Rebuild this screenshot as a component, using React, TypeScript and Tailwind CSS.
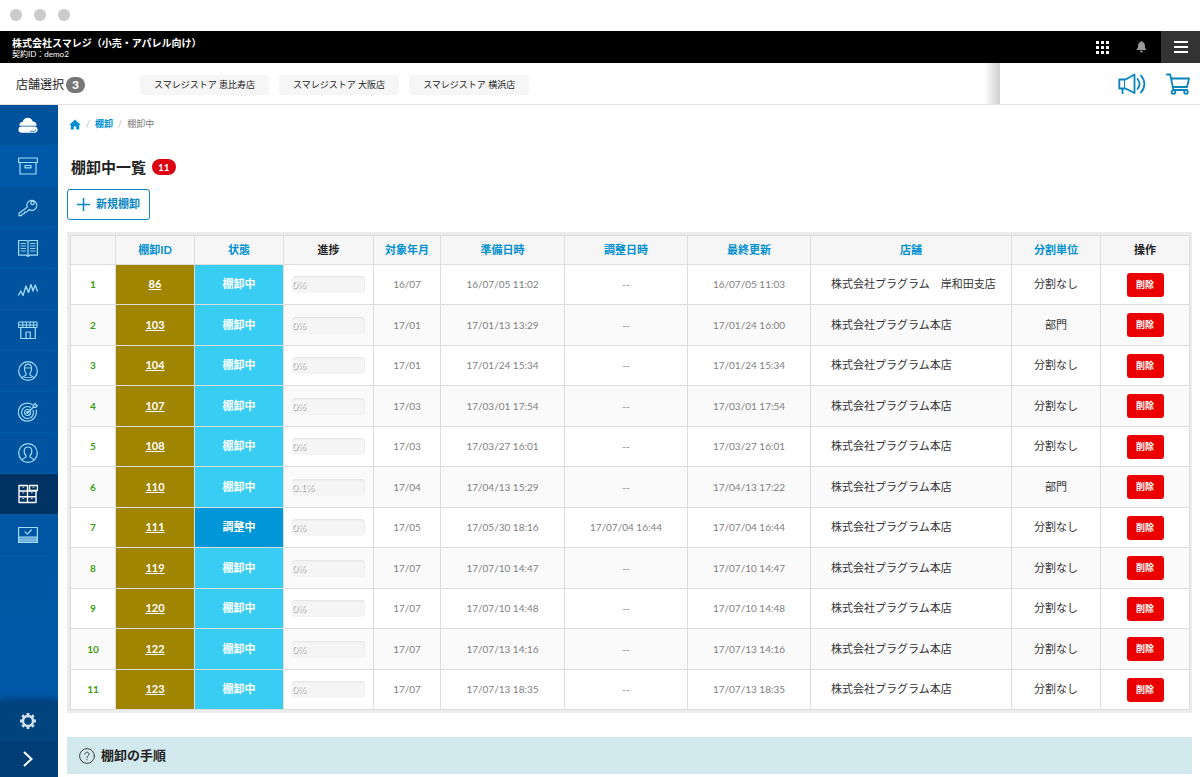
import type { ReactNode } from "react";

interface Stocktake {
  id: number;
  status: string;
  progress: string;
  month: string;
  prepared: [string, string];
  adjusted?: [string, string];
  updated: [string, string];
  store: string;
  unit: string;
}

const HONTEN = "株式会社プラグラム本店";

const stocktakes: Stocktake[] = [
  { id: 86, status: "棚卸中", progress: "0%", month: "16/07", prepared: ["16/07/05", "11:02"], updated: ["16/07/05", "11:03"], store: "株式会社プラグラム　岸和田支店", unit: "分割なし" },
  { id: 103, status: "棚卸中", progress: "0%", month: "17/01", prepared: ["17/01/13", "13:29"], updated: ["17/01/24", "16:00"], store: HONTEN, unit: "部門" },
  { id: 104, status: "棚卸中", progress: "0%", month: "17/01", prepared: ["17/01/24", "15:34"], updated: ["17/01/24", "15:34"], store: HONTEN, unit: "分割なし" },
  { id: 107, status: "棚卸中", progress: "0%", month: "17/03", prepared: ["17/03/01", "17:54"], updated: ["17/03/01", "17:54"], store: HONTEN, unit: "分割なし" },
  { id: 108, status: "棚卸中", progress: "0%", month: "17/03", prepared: ["17/03/27", "16:01"], updated: ["17/03/27", "16:01"], store: HONTEN, unit: "分割なし" },
  { id: 110, status: "棚卸中", progress: "0.1%", month: "17/04", prepared: ["17/04/13", "15:29"], updated: ["17/04/13", "17:22"], store: HONTEN, unit: "部門" },
  { id: 111, status: "調整中", progress: "0%", month: "17/05", prepared: ["17/05/30", "18:16"], adjusted: ["17/07/04", "16:44"], updated: ["17/07/04", "16:44"], store: HONTEN, unit: "分割なし" },
  { id: 119, status: "棚卸中", progress: "0%", month: "17/07", prepared: ["17/07/10", "14:47"], updated: ["17/07/10", "14:47"], store: HONTEN, unit: "分割なし" },
  { id: 120, status: "棚卸中", progress: "0%", month: "17/07", prepared: ["17/07/10", "14:48"], updated: ["17/07/10", "14:48"], store: HONTEN, unit: "分割なし" },
  { id: 122, status: "棚卸中", progress: "0%", month: "17/07", prepared: ["17/07/13", "14:16"], updated: ["17/07/13", "14:16"], store: HONTEN, unit: "分割なし" },
  { id: 123, status: "棚卸中", progress: "0%", month: "17/07", prepared: ["17/07/13", "18:35"], updated: ["17/07/13", "18:35"], store: HONTEN, unit: "分割なし" },
];

const columns = [
  { label: "", width: "w-[45px]", sortable: false },
  { label: "棚卸ID", width: "w-[79px]", sortable: true },
  { label: "状態", width: "w-[89px]", sortable: true },
  { label: "進捗", width: "w-[90px]", sortable: false },
  { label: "対象年月", width: "w-[67px]", sortable: true },
  { label: "準備日時", width: "w-[124px]", sortable: true },
  { label: "調整日時", width: "w-[123px]", sortable: true },
  { label: "最終更新", width: "w-[123px]", sortable: true },
  { label: "店舗", width: "w-[201px]", sortable: true },
  { label: "分割単位", width: "w-[89px]", sortable: true },
  { label: "操作", width: "w-[89px]", sortable: false },
];

const stores = ["恵比寿店", "大阪店", "横浜店"];

function Icon({ children }: { children: ReactNode }) {
  return (
    <svg viewBox="0 0 20 20" className="size-5" fill="none" stroke="currentColor" strokeWidth="1.2" strokeLinecap="round" strokeLinejoin="round" aria-hidden>
      {children}
    </svg>
  );
}

const navItems = [
  {
    label: "ホーム",
    tone: "bg-[#00529c] text-white",
    icon: (
      <>
        <path d="M1.5 10.8C1 8.500 2.600 6.800 4.600 7 5 4.400 7.200 2.800 9.800 2.800c2.300 0 4.200 1.400 4.900 3.600 2.400 0 4.200 1.800 3.800 4.400z" fill="currentColor" stroke="none" />
        <rect x="0.5" y="11.400" width="19" height="6.400" rx="3.200" fill="currentColor" stroke="none" />
        <path d="M12.500 16.300h3.800c.9 0 1.400-.6 1.400-1.500" stroke="#00529c" strokeWidth="0.8" />
      </>
    ),
  },
  {
    label: "商品",
    tone: "bg-[#0059a8] text-[#a3dcf7]",
    icon: (
      <>
        <rect x="0.600" y="2" width="18.800" height="4.500" />
        <path d="M2 6.500V18h16V6.500M7 9.500h6v2.300H7z" />
      </>
    ),
  },
  {
    label: "権限",
    tone: "bg-[#00529c] text-[#a3dcf7]",
    icon: (
      <>
        <path d="M9.200 10.300 1 16.300v2.400h2.600l.5-1.700h2l.4-1.800h2l2.600-2.600A5 5 0 1 0 9.200 10.300z" />
        <circle cx="14.500" cy="5.900" r="1.700" />
      </>
    ),
  },
  {
    label: "台帳",
    tone: "bg-[#00549f] text-[#a3dcf7]",
    icon: (
      <>
        <path d="M10 3.500v15M.6 2.500h7.900L10 3.500l1.500-1h7.900v14.700h-7.900L10 18.500l-1.500-1.300H.6z" />
        <path d="M3 5.500h4.500M3 8h4.500M3 10.500h4.500M3 13h4.500M12.500 5.500H17M12.500 8H17M12.500 10.500H17M12.500 13H17" strokeWidth="0.9" />
      </>
    ),
  },
  {
    label: "売上分析",
    tone: "bg-[#00549f] text-[#a3dcf7]",
    icon: <path d="m.6 16 2.200-4L5 16.500 8 7l2.500 6.500 2.500-8 2 6.500 2.200-6 2.200 6" strokeWidth="1.300" />,
  },
  {
    label: "店舗",
    tone: "bg-[#00549f] text-[#a3dcf7]",
    icon: (
      <>
        <path d="M1 2h18v5.500H1zM4.800 2v5.500M8.400 2v5.500M12 2v5.500M15.600 2v5.500M1 5h18" strokeWidth="1" />
        <path d="M2.800 8v10.500h14.500V8M8 18.500V12h4.300v6.500" />
      </>
    ),
  },
  {
    label: "会員",
    tone: "bg-[#00549f] text-[#a3dcf7]",
    icon: (
      <>
        <circle cx="10" cy="10" r="9.300" />
        <path d="M4 17c.4-1.800 3.200-2 4-3v-1.800C6.500 10.600 6.300 8.400 6.500 6.500 6.800 4.200 8.200 3.200 10 3.200s3.200 1 3.500 3.300c.2 1.900 0 4.100-1.500 5.700V14c.8 1 3.600 1.200 4 3" />
        <path d="M6.800 7c2-.2 4.400-.2 6.400 0M6.500 16.500h7" strokeWidth="0.8" />
      </>
    ),
  },
  {
    label: "ターゲット",
    tone: "bg-[#00549f] text-[#a3dcf7]",
    icon: (
      <>
        <path d="M14.200 2.500A9 9 0 1 0 18.200 8.200" />
        <path d="M12.500 5.300A6 6 0 1 0 15.200 8.500" />
        <circle cx="9.500" cy="10.500" r="3" />
        <circle cx="9.500" cy="10.500" r="0.8" fill="currentColor" />
        <path d="m9.500 10.500 6.500-5.800M15.200 5.500l.1-2.200 2-1.800.5 1.500 1.700.3-1.700 2z" />
      </>
    ),
  },
  {
    label: "スタッフ",
    tone: "bg-[#00549f] text-[#a3dcf7]",
    icon: (
      <>
        <circle cx="10" cy="10" r="9.300" />
        <path d="M4 17c.4-1.800 3.200-2 4-3v-1.300C6.500 11.300 6 9.500 6.200 7.500 6.500 5 8 4 10 4s3.500 1 3.800 3.500c.2 2-.3 3.800-1.800 5.200V14c.8 1 3.600 1.200 4 3" />
      </>
    ),
  },
  {
    label: "棚卸",
    tone: "bg-[#003363] text-white",
    icon: (
      <>
        <path d="M1 1.500h8.500V7H1zM11.500 1.500h8V6.500h-8zM1 7h17v5.800H1zM1 12.800h17v5.700H1zM9.500 7v11.500" strokeWidth="1.400" />
        <path d="M4.800 3.200h1M15 3.200h1M4.800 8.800h1M13.300 8.800h1M4.800 14.600h1M13.300 14.600h1" strokeWidth="0.800" />
      </>
    ),
  },
  {
    label: "承認",
    tone: "bg-[#0056a3] text-[#a3dcf7]",
    icon: (
      <>
        <path d="M.6 2.500h18.800v15H.6zM7 6.800l2.300 2.400L13.300 5" />
        <path d="M.6 12h18.800v5.500H.6z" fill="#5c9fce" />
        <path d="M1 14.200h18M1 15.800h18" strokeWidth="0.600" />
      </>
    ),
  },
];

function BrowserBar() {
  return (
    <div className="flex h-[31px] items-center gap-3 px-[10px] pb-[2px]">
      <span className="size-3 rounded-full bg-[#cbcbcb]" />
      <span className="size-3 rounded-full bg-[#cbcbcb]" />
      <span className="size-3 rounded-full bg-[#cbcbcb]" />
    </div>
  );
}

function Header() {
  return (
    <header className="flex h-8 items-center justify-between bg-black text-white">
      <div className="pt-[2px] pl-3">
        <p className="text-[10px] leading-3 font-bold">株式会社スマレジ（小売・アパレル向け）</p>
        <p className="text-[8px] leading-[10px]">契約ID：demo2</p>
      </div>
      <div className="flex h-full items-center">
        <button type="button" aria-label="アプリ" className="px-3">
          <svg viewBox="0 0 14 14" className="size-[14px]" fill="currentColor" aria-hidden>
            {[0, 5, 10].map((y) => [0, 5, 10].map((x) => <rect key={`${x}-${y}`} x={x + 1} y={y + 1} width="3" height="3" />))}
          </svg>
        </button>
        <button type="button" aria-label="お知らせ" className="px-[14px] text-[#999]">
          <svg viewBox="0 0 12 12" className="size-3" fill="currentColor" aria-hidden>
            <path d="M6.500 0c.6 0 .9.400.9.900 1.800.4 2.500 1.800 2.500 3.500 0 2.400.6 3.600 1.900 4.600H1.200c1.300-1 1.900-2.200 1.900-4.600 0-1.700.7-3.100 2.500-3.500C5.600.4 5.900 0 6.500 0zM5 9.700h3C7.800 10.900 7.300 11.500 6.500 11.500s-1.300-.6-1.500-1.800z" />
          </svg>
        </button>
        <button type="button" aria-label="メニュー" className="flex h-full w-[39px] items-center justify-center bg-[#333]">
          <svg viewBox="0 0 14 14" className="size-[14px]" stroke="currentColor" strokeWidth="2" aria-hidden>
            <path d="M0 2h14M0 7h14M0 12h14" />
          </svg>
        </button>
      </div>
    </header>
  );
}

function StoreBar() {
  return (
    <div className="flex h-[42px] border-b border-[#e2e2e2] bg-white">
      <div className="flex flex-1 items-center pt-[2px]">
        <div className="flex w-[140px] items-center gap-[2px] pl-4">
          <span className="text-xs">店舗選択</span>
          <span className="rounded-full bg-[#777] px-[6px] text-[12px] leading-4 font-black text-white">3</span>
        </div>
        <div className="flex gap-[10px]">
          {stores.map((store) => (
            <button key={store} type="button" className="h-5 rounded-sm bg-[#f6f6f6] px-[14px] text-[9px]">
              スマレジストア {store}
            </button>
          ))}
        </div>
      </div>
      <div className="w-4 bg-linear-to-r from-white to-[#cfcfcf]" />
      <div className="flex w-[200px] items-center justify-end gap-5 pr-[10px] text-[#0a84bd]">
        <a href="#news" aria-label="お知らせ">
          <svg viewBox="0 0 28 22" className="h-[22px] w-7" fill="none" stroke="currentColor" strokeWidth="1.800" strokeLinecap="round" strokeLinejoin="round" aria-hidden>
            <path d="M1.300 6.500H7.500L16.500 1.500v18.500L7.500 15.500H1.300zM4.500 15.500v4.700" />
            <path d="M6.500 7v8" strokeWidth="1" />
            <path d="M19.500 6c2.600 3.200 2.600 6.800 0 10M23 2.500c4.500 5.200 4.500 11.800 0 17" />
          </svg>
        </a>
        <a href="#cart" aria-label="カート">
          <svg viewBox="0 0 24 22" className="h-[22px] w-6" fill="none" stroke="currentColor" strokeWidth="1.800" strokeLinecap="round" strokeLinejoin="round" aria-hidden>
            <path d="M.9 1.500h3.300L7.500 17h13.500M5.200 5.500H23l-2 8.500H7" />
            <circle cx="7.500" cy="19" r="1.800" />
            <circle cx="20" cy="19" r="1.800" />
          </svg>
        </a>
      </div>
    </div>
  );
}

function Sidebar() {
  return (
    <nav className="flex w-[58px] shrink-0 flex-col overflow-hidden bg-linear-to-b from-[#00549f] to-[#005aa8]">
      {navItems.map((item) => (
        <a
          key={item.label}
          href="#menu"
          aria-label={item.label}
          className={`flex h-[41px] items-center justify-center border-b border-[#005ba9] pr-[3px] ${item.tone}`}
        >
          <Icon>{item.icon}</Icon>
        </a>
      ))}
      <div className="mt-auto shadow-[0_-3px_6px_rgba(0,40,90,0.5)]">
        <a href="#settings" aria-label="設定" className="flex h-10 items-center justify-center bg-[#00447f] pr-[2px] text-[#d5e2ee]">
          <svg viewBox="0 0 20 20" className="size-5" aria-hidden>
            <path
              d="M10 4.200v-2.200M10 18v-2.200M4.200 10H2M18 10h-2.200M5.900 5.900 4.300 4.300M15.700 15.700l-1.600-1.600M5.900 14.100l-1.600 1.600M15.700 4.300l-1.600 1.600"
              stroke="currentColor"
              strokeWidth="2.800"
            />
            <circle cx="10" cy="10" r="5" fill="none" stroke="currentColor" strokeWidth="2.400" />
          </svg>
        </a>
        <button type="button" aria-label="メニューを開く" className="flex h-9 w-full items-center justify-center bg-[#003e75] pr-[2px] text-white">
          <svg viewBox="0 0 10 16" className="h-4 w-[10px]" fill="none" stroke="currentColor" strokeWidth="2" aria-hidden>
            <path d="m1 1 7.500 7L1 15" />
          </svg>
        </button>
      </div>
    </nav>
  );
}

function DateTime({ value }: { value?: [string, string] }) {
  if (!value) return <>--</>;
  return (
    <>
      {value[0]} {value[1]}
    </>
  );
}

function StocktakeTable() {
  return (
    <div className="border-3 border-[#ececec]">
      <table className="w-full table-fixed border-collapse text-center text-[11px] text-[#222]">
        <thead>
          <tr className="h-[29px] bg-[#f6f6f6]">
            {columns.map((column) => (
              <th key={column.label} className={`border border-[#ddd] p-0 font-bold ${column.width}`}>
                {column.sortable ? (
                  <a href="#sort" className="text-[#0090d0]">{column.label}</a>
                ) : (
                  column.label
                )}
              </th>
            ))}
          </tr>
        </thead>
        <tbody>
          {stocktakes.map((row, index) => (
            <tr key={row.id} className="h-10 even:h-[41px] even:bg-[#fafafa] [&>td]:border [&>td]:border-[#ddd]">
              <td className="text-[10px] font-bold text-[#3a9d10]">{index + 1}</td>
              <td className="bg-[#a08500] font-bold text-white">
                <a href="#detail" className="underline">{row.id}</a>
              </td>
              <td className={`font-bold text-white ${row.status === "調整中" ? "bg-[#0096d8]" : "bg-[#3acdf3]"}`}>
                {row.status}
              </td>
              <td className="px-2">
                <div className="h-[17px] rounded-sm bg-[#f5f5f5] text-left text-[10px] leading-[17px] text-white shadow-[inset_0_1px_2px_rgba(0,0,0,0.08)] [text-shadow:1px_1px_1px_#888]">
                  {row.progress}
                </div>
              </td>
              <td className="text-[10px] text-[#808080]">{row.month}</td>
              <td className="text-[10px] text-[#808080]"><DateTime value={row.prepared} /></td>
              <td className="text-[10px] text-[#808080]"><DateTime value={row.adjusted} /></td>
              <td className="text-[10px] text-[#808080]"><DateTime value={row.updated} /></td>
              <td className="pl-5 text-left whitespace-nowrap text-[#333]">{row.store}</td>
              <td className="text-[#333]">{row.unit}</td>
              <td>
                <button type="button" className="h-6 w-[37px] rounded-[3px] bg-[#ea0000] align-middle text-[9px] font-bold text-white">
                  削除
                </button>
              </td>
            </tr>
          ))}
        </tbody>
      </table>
    </div>
  );
}

export default function App() {
  return (
    <div className="flex min-h-screen flex-col bg-white font-[Lato,'Noto_Sans_CJK_JP',sans-serif] text-[#222]" lang="ja">
      <BrowserBar />
      <Header />
      <StoreBar />
      <div className="flex flex-1">
        <Sidebar />
        <main className="min-w-0 flex-1 pt-[11px] pr-2 pl-[9px]">
          <div className="flex h-4 items-center gap-[5px] pl-[2px] text-[9px] text-[#777]">
            <a href="#home" aria-label="ホーム" className="text-[#0090d0]">
              <svg viewBox="0 0 12 11" className="h-[11px] w-3" fill="currentColor" aria-hidden>
                <path d="M6 .5 11.700 6H10.200v4.500H7.200V7.500H4.800v3H1.800V6H.3z" />
              </svg>
            </a>
            <span className="text-[#bbb]">/</span>
            <a href="#stocktake" className="font-bold text-[#0090d0]">棚卸</a>
            <span className="text-[#bbb]">/</span>
            <span>棚卸中</span>
          </div>

          <div className="mt-[23px] flex h-6 items-center gap-[6px] pl-1">
            <h1 className="text-[15px] leading-6 font-bold">棚卸中一覧</h1>
            <span className="rounded-full bg-[#dc0010] px-[6px] text-[10px] leading-4 font-bold text-white">11</span>
          </div>

          <button type="button" className="mt-[10px] flex h-[31px] items-center gap-[6px] rounded-[3px] border border-[#0a86c2] px-[9px] text-[11px] font-bold text-[#0a86c2]">
            <svg viewBox="0 0 13 13" className="size-[13px]" stroke="currentColor" strokeWidth="1.500" aria-hidden>
              <path d="M6.500 0v13M0 6.500h13" />
            </svg>
            新規棚卸
          </button>

          <div className="mt-3">
            <StocktakeTable />
          </div>

          <section className="mt-6 flex h-[37px] items-center gap-[6px] bg-[#d2e9ed] px-3">
            <svg viewBox="0 0 16 16" className="size-4" fill="none" stroke="#444" strokeWidth="1" strokeLinecap="round" aria-hidden>
              <circle cx="8" cy="8" r="7.400" />
              <path d="M5.900 6.200C6 4.900 6.900 4.200 8 4.200s2.100.8 2.100 1.900C10.100 7.600 8 7.600 8 9.600M8 11.500v.3" />
            </svg>
            <h2 className="text-[13px] font-bold">棚卸の手順</h2>
          </section>
        </main>
      </div>
    </div>
  );
}
